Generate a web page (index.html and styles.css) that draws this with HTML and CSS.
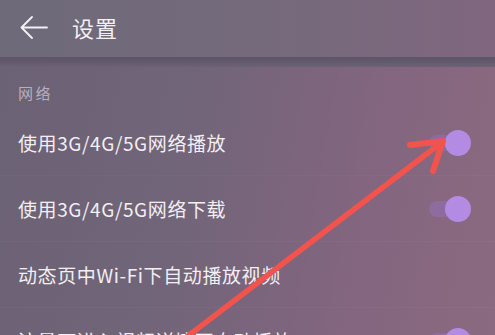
FILE: index.html
```html
<!DOCTYPE html>
<html lang="zh">
<head>
<meta charset="utf-8">
<link rel="stylesheet" href="styles.css">
</head>
<body>
<div class="page">
  <header class="header">
    <svg class="back" width="28" height="24" viewBox="0 0 28 24">
      <path d="M12 1 L1.5 11.5 L12 22 M1.5 11.5 H27" fill="none" stroke="#f4f0f4" stroke-width="1.8" stroke-linecap="round" stroke-linejoin="round"/>
    </svg>
    <h1 class="title">设置</h1>
  </header>
  <div class="band"></div>
  <div class="label">网络</div>
  <div class="row">
    <span class="text">使用3G/4G/5G网络播放</span>
    <span class="toggle on"><span class="track"></span><span class="knob"></span></span>
  </div>
  <div class="row">
    <span class="text">使用3G/4G/5G网络下载</span>
    <span class="toggle on"><span class="track"></span><span class="knob"></span></span>
  </div>
  <div class="row">
    <span class="text">动态页中Wi-Fi下自动播放视频</span>
  </div>
  <div class="row">
    <span class="text">流量下进入视频详情页自动播放</span>
    <span class="toggle on"><span class="track"></span><span class="knob"></span></span>
  </div>
  <svg class="arrow" width="495" height="335" viewBox="0 0 495 335">
    <path d="M180 342 L437 146" fill="none" stroke="#f2534d" stroke-width="5.5" stroke-linecap="round"/>
    <path d="M410 145 L443 141 L433 171" fill="none" stroke="#f2534d" stroke-width="6" stroke-linecap="round" stroke-linejoin="round"/>
  </svg>
</div>
</body>
</html>
```

FILE: styles.css
```css
html, body {
  margin: 0;
  padding: 0;
  width: 495px;
  height: 335px;
  overflow: hidden;
}
.page {
  position: relative;
  width: 495px;
  height: 335px;
  overflow: hidden;
  font-family: "Noto Sans CJK SC", "Noto Sans", sans-serif;
  color: #f3eff3;
  background: linear-gradient(100deg, #6b6274 0%, #726579 40%, #82657f 70%, #8a6a80 100%);
}
.header {
  height: 57px;
  display: flex;
  align-items: center;
  padding-left: 20px;
  background: linear-gradient(90deg, #6e6a79 0%, #746a7b 50%, #80677f 100%);
}
.back {
  display: block;
  margin-top: -2px;
}
.title {
  margin: 0 0 0 24px;
  font-size: 22px;
  font-weight: 400;
  letter-spacing: 1px;
  line-height: 30px;
  margin-top: -4px;
}
.band {
  height: 10px;
  background: linear-gradient(180deg, #5c5468 0%, #64596e 50%, #6c6275 100%);
}
.label {
  padding: 16px 0 7px 18px;
  font-size: 15px;
  line-height: 20px;
  letter-spacing: 2.5px;
  color: #b8aebf;
}
.row {
  height: 66px;
  box-sizing: border-box;
  display: flex;
  align-items: center;
  justify-content: space-between;
  padding: 0 24px 0 18px;
  border-bottom: 1px solid rgba(255, 255, 255, 0.03);
}
.text {
  font-size: 19px;
  letter-spacing: 0.6px;
  line-height: 26px;
}
.toggle {
  position: relative;
  width: 42px;
  height: 26px;
  flex: none;
}
.track {
  position: absolute;
  left: 0;
  right: 6px;
  top: 5px;
  height: 16px;
  border-radius: 8px;
  background: rgba(150, 112, 185, 0.55);
}
.knob {
  position: absolute;
  right: 0;
  top: 0;
  width: 26px;
  height: 26px;
  border-radius: 50%;
  background: #b38be3;
}
.arrow {
  position: absolute;
  left: 0;
  top: 0;
  pointer-events: none;
}
```
